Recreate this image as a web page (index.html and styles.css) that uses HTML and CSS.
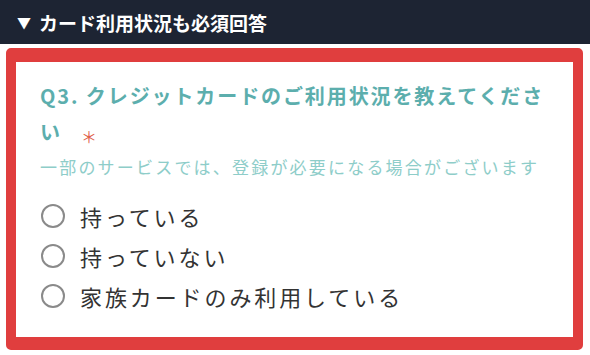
FILE: index.html
```html
<!DOCTYPE html>
<html lang="ja">
<head>
<meta charset="utf-8">
<link rel="stylesheet" href="styles.css">
</head>
<body>
<div class="bar"><span class="tri">▼</span><span class="bar-text">カード利用状況も必須回答</span></div>
<div class="box">
  <div class="q-title">Q3. クレジットカードのご利用状況を教えてください<span class="req">＊</span></div>
  <div class="q-sub">一部のサービスでは、登録が必要になる場合がございます</div>
  <ul class="opts">
    <li class="opt"><span class="radio"></span><span class="opt-text">持っている</span></li>
    <li class="opt"><span class="radio"></span><span class="opt-text">持っていない</span></li>
    <li class="opt"><span class="radio"></span><span class="opt-text">家族カードのみ利用している</span></li>
  </ul>
</div>
</body>
</html>
```
FILE: styles.css
```css
html, body {
  margin: 0;
  padding: 0;
  background: #ffffff;
  font-family: "Noto Sans CJK JP", "Noto Sans", sans-serif;
}
.bar {
  height: 44px;
  background: #1d2433;
  color: #ffffff;
  display: flex;
  align-items: center;
  padding-left: 17px;
  box-sizing: border-box;
}
.tri {
  font-size: 14px;
  margin-right: 8px;
  line-height: 1;
}
.bar-text {
  font-size: 19px;
  font-weight: 700;
  line-height: 1;
}
.box {
  margin: 4px 7px 0 6px;
  border-style: solid;
  border-color: #e03e3e;
  border-width: 14px 10px 13px 10px;
  border-radius: 5px;
  padding: 16px 20px 21px 24px;
  background: #ffffff;
}
.q-title {
  font-size: 20px;
  font-weight: 700;
  color: #5caead;
  line-height: 36px;
  letter-spacing: 1.9px;
}
.req {
  display: inline-block;
  color: #e0604a;
  font-weight: 400;
  font-size: 16px;
  line-height: 16px;
  margin-left: 19px;
  vertical-align: -3px;
}
.q-sub {
  margin-top: 4px;
  font-size: 17px;
  line-height: 26px;
  color: #8ecdc9;
  letter-spacing: 2.2px;
  white-space: nowrap;
}
.opts {
  list-style: none;
  margin: 16px 0 0 0;
  padding: 0;
}
.opt {
  display: flex;
  align-items: center;
  height: 40px;
}
.radio {
  width: 20px;
  height: 20px;
  border: 2px solid #8a8a8a;
  border-radius: 50%;
  margin-left: 1px;
  margin-right: 15px;
  flex: none;
}
.opt-text {
  font-size: 22px;
  color: #333333;
  letter-spacing: 2.9px;
}
```
